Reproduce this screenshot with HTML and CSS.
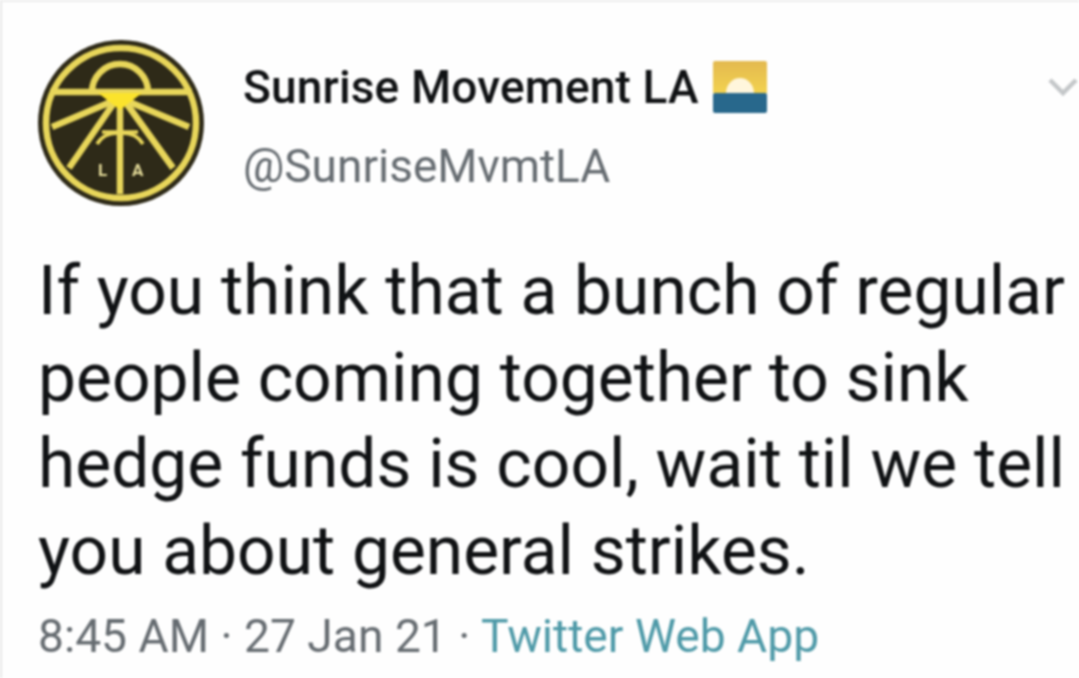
FILE: index.html
```html
<!DOCTYPE html>
<html>
  <head>
    <meta charset="UTF-8">
    <title>Sunrise Movement LA</title>
    <link rel="stylesheet" href="styles.css">
  </head>
  <body>
    <div class="tweet">
      <div class="tweet-head">
        <svg class="avatar" viewBox="0 0 166 166" width="166" height="166">
          <circle cx="83" cy="83" r="83" fill="#2e2a18"/>
          <g fill="none" stroke="#e8d65a" stroke-width="6.5">
            <circle cx="83" cy="83" r="75"/>
            <path d="M54 52a28 28 0 0 1 56 0"/>
            <path d="M12 52H154"/>
            <path d="M82 58V154"/>
            <path d="M82 58L14 87"/>
            <path d="M82 58L151 87"/>
            <path d="M78 60L31 128"/>
            <path d="M86 60L135 128"/>
          </g>
          <g fill="none" stroke="#e8d65a" stroke-width="3.5">
            <path d="M59 104Q66 92 82 93Q98 92 105 104"/>
            <path d="M64 92H100"/>
          </g>
          <path d="M60 53H104L82 70Z" fill="#fbe32c"/>
          <text class="avatar-letter" x="60" y="136">L</text>
          <text class="avatar-letter" x="94" y="136">A</text>
        </svg>
        <div class="names">
          <div class="name-row">
            <span class="name">Sunrise Movement LA</span>
            <svg class="badge" viewBox="0 0 54 52" width="54" height="52">
              <defs>
                <linearGradient id="sky" x1="0" y1="0" x2="0" y2="1">
                  <stop offset="0" stop-color="#e3b94f"/>
                  <stop offset="1" stop-color="#f3d34f"/>
                </linearGradient>
              </defs>
              <rect x="0" y="0" width="54" height="33" rx="2" fill="url(#sky)"/>
              <path d="M13 32a14 15 0 0 1 28 0Z" fill="#fff6dc"/>
              <rect x="0" y="32" width="54" height="20" rx="2" fill="#28688c"/>
            </svg>
          </div>
          <div class="handle">@SunriseMvmtLA</div>
        </div>
        <svg class="caret" viewBox="0 0 32 20" width="32" height="20">
          <path d="M3 3L16 16L29 3" fill="none" stroke="#c4c7c9" stroke-width="4.5"/>
        </svg>
      </div>
      <p class="tweet-text">If you think that a bunch of regular<br>people coming together to sink<br>hedge funds is cool, wait til we tell<br>you about general strikes.</p>
      <div class="meta">8:45 AM · 27 Jan 21 · <span class="source">Twitter Web App</span></div>
    </div>
  </body>
</html>
```

FILE: styles.css
```css
html, body {
  margin: 0;
  padding: 0;
}

body {
  width: 1079px;
  height: 678px;
  overflow: hidden;
  background-color: #fefefe;
  font-family: Roboto, "Liberation Sans", sans-serif;
}

.tweet {
  height: 678px;
  box-sizing: border-box;
  padding: 38px 0 0 36px;
  border-left: 2px solid #e8e8e8;
  border-top: 2px solid #ededed;
  color: #101214;
  filter: blur(0.9px);
}

.tweet-head {
  display: flex;
  align-items: flex-start;
}

.avatar {
  flex: none;
}

.avatar-letter {
  font-size: 17px;
  font-weight: bold;
  fill: #e6dd9a;
}

.names {
  margin-left: 39px;
  padding-top: 20px;
  flex: 1;
}

.name-row {
  display: flex;
  align-items: center;
}

.name {
  font-size: 46px;
  font-weight: 500;
  letter-spacing: 0.15px;
}

.badge {
  margin-left: 14px;
}

.handle {
  margin-top: 25px;
  font-size: 46px;
  line-height: 54px;
  color: #666c71;
}

.caret {
  margin: 37px 0 0 0;
}

.tweet-text {
  margin: 42px 0 0;
  font-size: 67.7px;
  line-height: 86.5px;
  white-space: nowrap;
}

.meta {
  margin-top: 15px;
  font-size: 46.2px;
  color: #666c71;
}

.source {
  color: #4f9aa8;
}
```
